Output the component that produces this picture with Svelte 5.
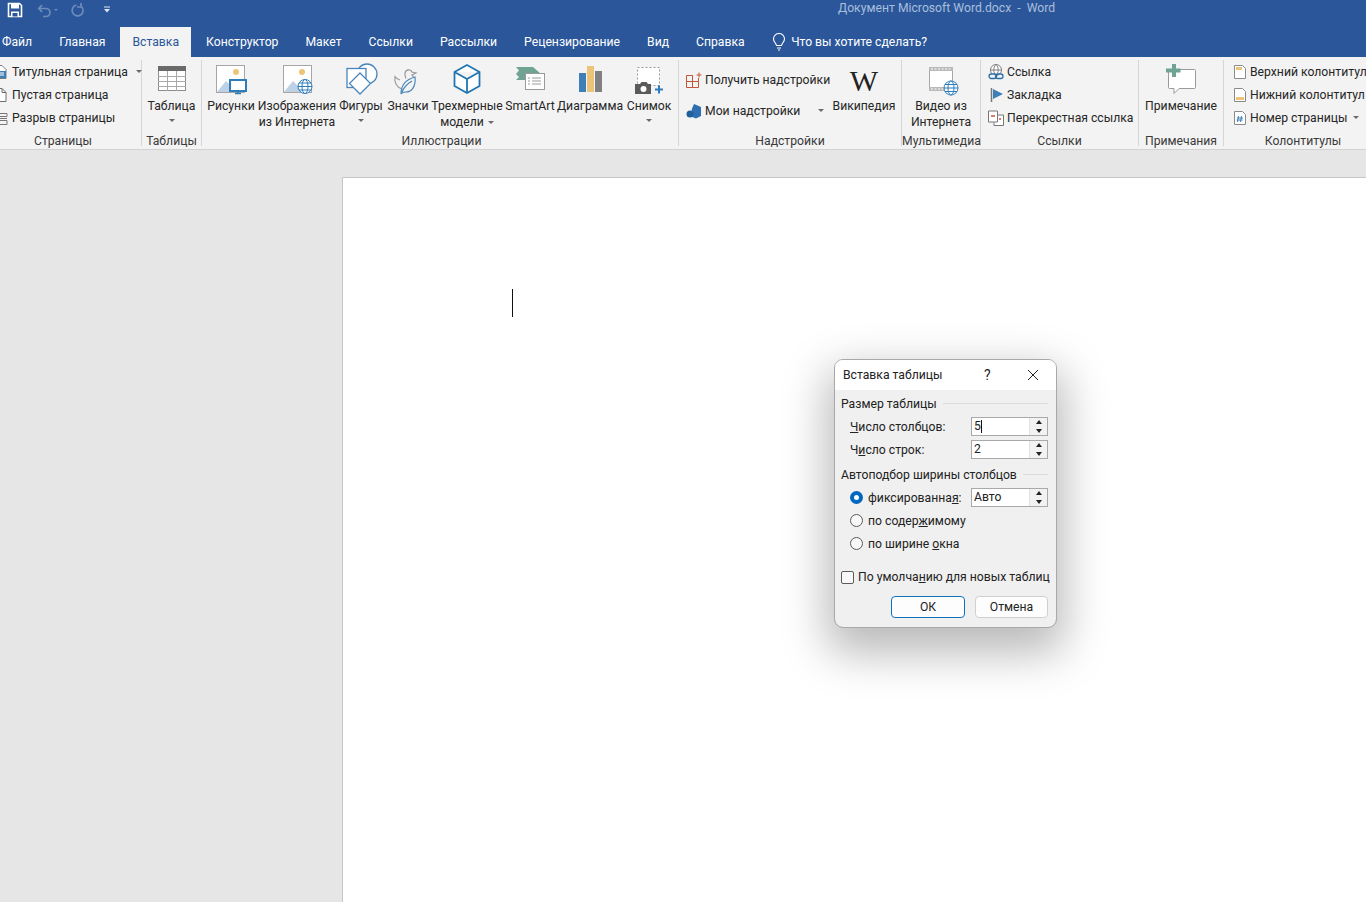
<script>
  const tabs = ['Файл','Главная','Вставка','Конструктор','Макет','Ссылки','Рассылки','Рецензирование','Вид','Справка'];
</script>

<div class="app">
  <header class="titlebar">
    <div class="qat">
      <svg class="save" width="16" height="16" viewBox="0 0 16 16"><path d="M1.500 1.500h11l2 2v11h-13z" fill="none" stroke="#fff" stroke-width="1.600"/><rect x="4" y="2" width="8" height="4.500" fill="#fff"/><rect x="4" y="9.500" width="8" height="5" fill="#fff"/><rect x="5.500" y="11" width="5" height="3.500" fill="#2b579a"/></svg>
      <svg class="undo" width="22" height="16" viewBox="0 0 22 16"><path d="M5 3 1.800 6.500 5 10M2 6.500h7a4 4 0 0 1 0 8H6" fill="none" stroke="#6d8cbc" stroke-width="1.700"/><path d="M17 7l2 2 2-2z" fill="#6d8cbc"/></svg>
      <svg class="redo" width="16" height="16" viewBox="0 0 16 16"><path d="M11.500 4.500a5.500 5.500 0 1 1-5-1.500M11 1v4h-4" fill="none" stroke="#6d8cbc" stroke-width="1.700"/></svg>
      <svg class="custom" width="8" height="10" viewBox="0 0 8 10"><path d="M1 2h6" stroke="#dfe7f3" stroke-width="1"/><path d="M1 4h6L4 7.500z" fill="#dfe7f3"/></svg>
    </div>
    <div class="doc-title">Документ Microsoft Word.docx  -  Word</div>
  </header>

  <nav class="tabs">
    {#each tabs as t}
      <div class="tab" class:active={t === 'Вставка'}>{t}</div>
    {/each}
    <div class="tell">
      <svg width="14" height="18" viewBox="0 0 14 18"><path d="M4.500 12.500C4 10 1.500 9 1.500 6a5.500 5.500 0 0 1 11 0c0 3-2.500 4-3 6.500zM5 15h4M6 17h2" fill="none" stroke="#fff" stroke-width="1.100"/></svg>
      <span>Что вы хотите сделать?</span>
    </div>
  </nav>

  <section class="ribbon">
    <div class="group g-pages">
      <div class="content small-list">
        <div class="sm"><svg width="16" height="16" viewBox="0 0 16 16"><path d="M3 1.500h7l4 4v9H3z" fill="#fff" stroke="#7a7a7a"/><rect x="3" y="7" width="11" height="7" fill="#3f7fb8"/><path d="M5 4h5M5 9h7M5 11h7" stroke="#fff"/></svg><span>Титульная страница</span><i class="caret"></i></div>
        <div class="sm"><svg width="16" height="16" viewBox="0 0 16 16"><path d="M3 1.500h7l4 4v9H3zM10 1.500v4h4" fill="#fff" stroke="#6e6e6e"/></svg><span>Пустая страница</span></div>
        <div class="sm"><svg width="16" height="16" viewBox="0 0 16 16"><path d="M1 3.500h14v3H1M1 14.500h14v-4H1M0 8.500h15" fill="none" stroke="#777"/></svg><span>Разрыв страницы</span></div>
      </div>
      <div class="glabel">Страницы</div>
    </div>

    <div class="group g-table">
      <div class="content">
        <div class="big w58">
          <svg width="32" height="32" viewBox="0 0 32 32"><rect x="2.500" y="3.500" width="27" height="24" fill="#fff" stroke="#8d8d8d"/><rect x="2" y="3" width="28" height="5" fill="#6a6a6a"/><path d="M2 13.500h28M2 18.500h28M2 23.500h28M11.500 8v20M20.500 8v20" stroke="#a9a9a9"/></svg>
          <div class="lbl">Таблица</div><i class="caret solo"></i>
        </div>
      </div>
      <div class="glabel">Таблицы</div>
    </div>

    <div class="group g-illus">
      <div class="content">
        <div class="big w52">
          <svg width="32" height="32" viewBox="0 0 32 32"><rect x="1.500" y="2.500" width="28" height="27" fill="#fff" stroke="#a6a6a6"/><circle cx="21" cy="9" r="3" fill="#ecc477"/><path d="M2 29l9-11 6 6 5 5z" fill="#bcd0e6"/><rect x="15" y="17" width="16" height="11" fill="#fff" stroke="#2e7cbb" stroke-width="2"/><path d="M20 30.500h6M23 28v2" stroke="#2e7cbb" stroke-width="1.500"/></svg>
          <div class="lbl">Рисунки</div>
        </div>
        <div class="big w80">
          <svg width="32" height="32" viewBox="0 0 32 32"><rect x="2.500" y="2.500" width="28" height="27" fill="#fff" stroke="#a6a6a6"/><circle cx="21" cy="9" r="3" fill="#ecc477"/><path d="M3 29l9-11 6 6 5 5z" fill="#bcd0e6"/><g fill="#fff" stroke="#2e7cbb"><circle cx="24" cy="23.500" r="7"/><ellipse cx="24" cy="23.500" rx="3" ry="7"/><path d="M17 23.500h14M18 20h12M18 27h12" fill="none"/></g></svg>
          <div class="lbl">Изображения<br>из Интернета</div>
        </div>
        <div class="big w48">
          <svg width="32" height="32" viewBox="0 0 32 32"><g fill="#fff" stroke="#4a86bb" stroke-width="1.300"><circle cx="22" cy="11" r="10"/><rect x="2" y="5.500" width="19" height="19"/><path d="M15 10l10.500 10.500L15 31 4.500 20.500z"/></g></svg>
          <div class="lbl">Фигуры</div><i class="caret solo"></i>
        </div>
        <div class="big w46">
          <svg width="32" height="32" viewBox="0 0 32 32"><path d="M8 17c-2-.500-4-2-5-3.500-1 6 2 11 7 12.500 5 1 9-1 11-6 1.500-3.500 1-6-1-8l4-2-4-1c-1-3-6-3-7 1-.5 2 .5 4 1 5.500" fill="none" stroke="#9a9a9a" stroke-width="1.200"/><path d="M9 31c0-8 3-14 14-17 1 9-3 15-9 15-2 0-4 0-5 2zM10 29c2-5 5-8 10-11" fill="#f3f3f3" stroke="#4b87b9" stroke-width="1.200"/></svg>
          <div class="lbl">Значки</div>
        </div>
        <div class="big w72">
          <svg width="32" height="32" viewBox="0 0 32 32"><path d="M16 2 28.500 9v14L16 30 3.500 23V9zM3.500 9 16 16l12.500-7M16 16v14" fill="#fff" stroke="#2176b1" stroke-width="1.800"/></svg>
          <div class="lbl">Трехмерные<br>модели<i class="caret"></i></div>
        </div>
        <div class="big w54">
          <svg width="32" height="32" viewBox="0 0 32 32"><path d="M2 4h17l8 7H2l3-3.500z" fill="#6fa393"/><path d="M2 11h19l-8 6H2l3-3z" fill="#6fa393"/><rect x="11.500" y="10.500" width="19" height="16" fill="#fff" stroke="#9a9a9a"/><path d="M18 15h9M18 18h9M18 21h9M14 15h2M14 18h2M14 21h2" stroke="#9a9a9a"/></svg>
          <div class="lbl">SmartArt</div>
        </div>
        <div class="big w66">
          <svg width="32" height="32" viewBox="0 0 32 32"><rect x="5" y="10" width="7" height="19" fill="#3f7fb8"/><rect x="13" y="3" width="7" height="26" fill="#ecc477"/><rect x="21" y="8" width="7" height="21" fill="#808080"/></svg>
          <div class="lbl">Диаграмма</div>
        </div>
        <div class="big w52">
          <svg width="32" height="32" viewBox="0 0 32 32"><rect x="4.500" y="4.500" width="22" height="18" fill="#fff" stroke="#9a9a9a" stroke-dasharray="2 2"/><path d="M2 21h5l1.500-2h5l1.500 2h3v10H2z" fill="#5a5a5a"/><circle cx="10.500" cy="26" r="3" fill="#fff"/><path d="M22 26.500h8M26 22.500v8" stroke="#2e7cbb" stroke-width="2"/></svg>
          <div class="lbl">Снимок</div><i class="caret solo"></i>
        </div>
      </div>
      <div class="glabel">Иллюстрации</div>
    </div>

    <div class="group g-addins">
      <div class="content">
        <div class="addin-list">
          <div class="sm tall"><svg width="16" height="16" viewBox="0 0 16 16"><path d="M.5 3.500h6v6h-6zM.5 9.500v6h6v-6zM6.500 9.500h6v6h-6zM6.500 3.500v6h6V6" fill="none" stroke="#c4543a"/><path d="M13 .5v5M10.500 3h5" stroke="#c4543a"/></svg><span>Получить надстройки</span></div>
          <div class="sm tall"><svg width="16" height="16" viewBox="0 0 16 16"><path d="M8 1l7 3v9l-5 2.500-5-2 1-8z" fill="#2d6fb0"/><circle cx="4" cy="11" r="3.500" fill="#1f5f9e"/></svg><span>Мои надстройки</span><i class="caret far"></i></div>
        </div>
        <div class="big w66">
          <div class="wiki">W</div>
          <div class="lbl">Википедия</div>
        </div>
      </div>
      <div class="glabel">Надстройки</div>
    </div>

    <div class="group g-media">
      <div class="content">
        <div class="big wfull">
          <svg width="32" height="32" viewBox="0 0 32 32"><rect x="4.500" y="4.500" width="23" height="23" fill="#fff" stroke="#a6a6a6"/><path d="M4 4h24v4H4zM4 24h24v4H4z" fill="#b9b9b9"/><path d="M6 6h20M6 26h14" stroke="#fff" stroke-dasharray="2 1.500"/><g fill="#fff" stroke="#2e7cbb"><circle cx="26" cy="25" r="7"/><ellipse cx="26" cy="25" rx="3" ry="7"/><path d="M19 25h14M20 21.500h12M20 28.500h12" fill="none"/></g></svg>
          <div class="lbl">Видео из<br>Интернета</div>
        </div>
      </div>
      <div class="glabel">Мультимедиа</div>
    </div>

    <div class="group g-links">
      <div class="content small-list">
        <div class="sm"><svg width="16" height="16" viewBox="0 0 16 16"><circle cx="8" cy="6" r="5.500" fill="#fff" stroke="#808080"/><path d="M2.500 6h11M8 .5c-3 3-3 8 0 11M8 .5c3 3 3 8 0 11" fill="none" stroke="#808080"/><rect x="1" y="10" width="7.500" height="4.500" rx="2.200" fill="#f3f3f3" stroke="#2e6fa8" stroke-width="1.300"/><rect x="7.500" y="10" width="7.500" height="4.500" rx="2.200" fill="none" stroke="#2e6fa8" stroke-width="1.300"/></svg><span>Ссылка</span></div>
        <div class="sm"><svg width="16" height="16" viewBox="0 0 16 16"><path d="M3.500 1v14" stroke="#777" stroke-width="1.500"/><path d="M5 2l10 5-10 5z" fill="#3f7fb8"/></svg><span>Закладка</span></div>
        <div class="sm"><svg width="16" height="16" viewBox="0 0 16 16"><path d="M.5 1h9v11h-9zM10 5h5.500v10.500H6V12.500" fill="#fff" stroke="#777"/><path d="M3 6h4M11 9h2" stroke="#c4543a" stroke-width="1.500"/></svg><span>Перекрестная ссылка</span></div>
      </div>
      <div class="glabel">Ссылки</div>
    </div>

    <div class="group g-notes">
      <div class="content">
        <div class="big wfull">
          <svg width="32" height="32" viewBox="0 0 32 32"><path d="M3.500 6.500h26a1 1 0 0 1 1 1v17a1 1 0 0 1-1 1H14l-5 5v-5H4.500a1 1 0 0 1-1-1z" fill="#fff" stroke="#9a9a9a"/><path d="M7 1h4v4.500h4.500v4H11V14H7V9.500H1v-4h6z" fill="#6fa393"/></svg>
          <div class="lbl">Примечание</div>
        </div>
      </div>
      <div class="glabel">Примечания</div>
    </div>

    <div class="group g-head">
      <div class="content small-list">
        <div class="sm"><svg width="16" height="16" viewBox="0 0 16 16"><path d="M2.500 1.500h8l3 3v10h-11z" fill="#fff" stroke="#8a8a8a"/><rect x="4" y="3" width="6" height="3" fill="#ecc477"/></svg><span>Верхний колонтитул</span></div>
        <div class="sm"><svg width="16" height="16" viewBox="0 0 16 16"><path d="M2.500 1.500h8l3 3v10h-11z" fill="#fff" stroke="#8a8a8a"/><rect x="4" y="10" width="8" height="3" fill="#ecc477"/></svg><span>Нижний колонтитул</span></div>
        <div class="sm"><svg width="16" height="16" viewBox="0 0 16 16"><path d="M2.500 1.500h8l3 3v10h-11z" fill="#fff" stroke="#8a8a8a"/><path d="M6.500 6l-1 6M9.500 6l-1 6M5 8h6M4.700 10h6" stroke="#3f7fb8"/></svg><span>Номер страницы</span><i class="caret"></i></div>
      </div>
      <div class="glabel">Колонтитулы</div>
    </div>
  </section>

  <main class="canvas">
    <div class="page"><div class="cursor"></div></div>
  </main>

  <div class="dialog">
    <div class="dlg-title">
      <span class="dlg-name">Вставка таблицы</span>
      <span class="help">?</span>
      <svg class="close" width="12" height="12" viewBox="0 0 12 12"><path d="M1 1l10 10M11 1 1 11" stroke="#222" stroke-width="1"/></svg>
    </div>
    <div class="dlg-body">
      <div class="legend"><span>Размер таблицы</span></div>
      <div class="row r1"><label for="a"><u>Ч</u>исло столбцов:</label><div class="spin"><span class="val">5<b class="caretline"></b></span><div class="arrows"><i class="up"></i><i class="down"></i></div></div></div>
      <div class="row r2"><label for="a">Ч<u>и</u>сло строк:</label><div class="spin"><span class="val">2</span><div class="arrows"><i class="up"></i><i class="down"></i></div></div></div>
      <div class="legend l2"><span>Автоподбор ширины столбцов</span></div>
      <div class="row r3"><span class="radio on"></span><label for="a">фиксированна<u>я</u>:</label><div class="spin"><span class="val">Авто</span><div class="arrows"><i class="up"></i><i class="down"></i></div></div></div>
      <div class="row r4"><span class="radio"></span><label for="a">по содер<u>ж</u>имому</label></div>
      <div class="row r4"><span class="radio"></span><label for="a">по ширине <u>о</u>кна</label></div>
      <div class="check"><span class="box"></span><label for="a">По умолча<u>н</u>ию для новых таблиц</label></div>
      <div class="buttons"><div class="btn ok">ОК</div><div class="btn">Отмена</div></div>
    </div>
  </div>
</div>

<style>
  :global(body) { margin: 0; overflow: hidden; }
  .app { width: 1366px; height: 902px; overflow: hidden; position: relative; background: #e6e6e6; font-family: Roboto, "Noto Sans", sans-serif; font-size: 12.200px; color: #262626; display: flex; flex-direction: column; }

  .titlebar { height: 27px; background: #2b579a; display: flex; flex: none; }
  .qat { display: flex; align-items: flex-start; padding: 2px 0 0 7px; }
  .save { margin-right: 14px; }
  .undo { margin-right: 11px; }
  .custom { margin: 3px 0 0 17px; }
  .doc-title { margin-left: 727px; color: #a9bedd; white-space: pre; line-height: 17px; }

  .tabs { height: 30px; background: #2b579a; display: flex; flex: none; color: #fff; margin-left: -11.500px; }
  .tab { padding: 0 13.500px; line-height: 30px; height: 30px; white-space: nowrap; }
  .tab.active { background: #f3f3f3; color: #2b579a; padding: 0 12px; margin: 0 1.500px; }
  .tell { display: flex; align-items: center; gap: 5px; margin-left: 14px; }

  .ribbon { height: 93px; background: #f3f3f3; border-bottom: 1px solid #d2d2d2; display: flex; flex: none; overflow: hidden; padding-top: 3px; box-sizing: border-box; }
  .group { height: 86px; flex: none; border-right: 1px solid #d6d6d6; display: flex; flex-direction: column; box-sizing: border-box; }
  .content { height: 73px; display: flex; }
  .glabel { height: 13px; line-height: 16px; text-align: center; white-space: nowrap; color: #3a3a3a; }
  .g-pages { width: 157px; margin-left: -15px; }
  .g-table { width: 60px; }
  .g-illus { width: 477px; padding-left: 3px; }
  .g-addins { width: 223px; }
  .g-media { width: 79px; }
  .g-links { width: 158px; }
  .g-notes { width: 85px; }
  .g-head { width: 158px; border-right: 0; }

  .big { display: flex; flex-direction: column; align-items: center; flex: none; padding-top: 3px; }
  .big svg { display: block; margin-bottom: 3px; overflow: visible; }
  .lbl { line-height: 16px; text-align: center; white-space: nowrap; }
  .w46 { width: 46px; } .w48 { width: 48px; } .w52 { width: 52px; } .w54 { width: 54px; }
  .w58 { width: 59px; } .w66 { width: 66px; } .w72 { width: 72px; } .w80 { width: 80px; }
  .wfull { width: 100%; }

  .caret { display: inline-block; width: 0; height: 0; border: 3px solid transparent; border-top: 3px solid #6b6b6b; border-bottom: 0; margin-left: 4px; vertical-align: middle; }
  .caret.solo { margin: 5px 0 0; }
  .caret.far { margin-left: 15px; }

  .small-list { flex-direction: column; }
  .g-pages .small-list { padding-left: 7px; }
  .g-links .small-list { padding-left: 7px; }
  .g-head .small-list { padding-left: 8px; }
  .sm { height: 23px; display: flex; align-items: center; gap: 4px; white-space: nowrap; flex: none; }
  .sm svg { flex: none; overflow: visible; }
  .g-links .sm { gap: 3px; }
  .g-head .sm { gap: 2px; }

  .addin-list { width: 152px; padding: 4px 0 0 7px; box-sizing: border-box; }
  .sm.tall { height: 31px; gap: 3px; }
  .wiki { font-family: "Liberation Serif", serif; font-size: 30px; line-height: 35px; color: #222; }

  .canvas { flex: 1; min-height: 0; padding: 27px 0 0 342px; display: flex; box-sizing: border-box; }
  .page { flex: 1; background: #fff; border: 1px solid #c6c6c6; border-right: 0; border-bottom: 0; padding: 111px 0 0 169px; }
  .cursor { width: 1px; height: 28px; background: #111; }

  .dialog { position: absolute; left: 835px; top: 360px; width: 221px; height: 267px; box-sizing: border-box; background: #f0f0f0; border-radius: 8px; outline: 1px solid #a8a8a8; box-shadow: 0 18px 45px 8px rgba(0,0,0,.28); overflow: hidden; display: flex; flex-direction: column; color: #222; }
  .dlg-title { height: 30px; flex: none; background: #fff; display: flex; align-items: center; padding-left: 8px; position: relative; }
  .dlg-name { width: 141px; }
  .help { width: 45px; font-size: 14px; color: #222; }
  .close { margin-left: -2px; }
  .dlg-body { padding: 5px 8px 0 6px; flex: 1; }
  .legend { display: flex; align-items: center; height: 17px; gap: 6px; }
  .legend::after { content: ""; flex: 1; height: 1px; background: #dcdcdc; }
  .row { display: flex; align-items: center; height: 23px; padding-left: 9px; }
  .row label { flex: 1; white-space: nowrap; }
  .r1 { margin-top: 3px; }
  .l2 { margin-top: 4px; height: 19px; }
  .r3 { margin-top: 2px; }
  .radio { width: 13px; height: 13px; box-sizing: border-box; border: 1px solid #5b5b5b; border-radius: 50%; background: #f8f8f8; margin-right: 5px; flex: none; }
  .radio.on { border: 4px solid #0067c0; background: #fff; }
  .spin { width: 77px; height: 19px; box-sizing: border-box; background: #fff; border: 1px solid #a9a9a9; display: flex; flex: none; margin-left: -1px; }
  .val { flex: 1; padding-left: 2px; line-height: 17px; display: flex; align-items: center; }
  .caretline { width: 1px; height: 13px; background: #111; }
  .arrows { width: 17px; display: flex; flex-direction: column; background: #f0f0f0; border-left: 1px solid #e2e2e2; gap: 1px; }
  .arrows i { flex: 1; background: #f2f2f2; display: flex; align-items: center; justify-content: center; }
  .arrows i::after { content: ""; border: 3.500px solid transparent; }
  .up::after { border-bottom: 4px solid #222 !important; border-top: 0 !important; }
  .down::after { border-top: 4px solid #222 !important; border-bottom: 0 !important; }
  .check { display: flex; align-items: center; gap: 4px; margin-top: 13px; height: 18px; white-space: nowrap; }
  .box { width: 13px; height: 13px; border: 1px solid #5b5b5b; border-radius: 2px; background: #f8f8f8; flex: none; box-sizing: border-box; }
  .buttons { display: flex; gap: 10px; margin-top: 10px; padding-left: 50px; }
  .btn { width: 73px; height: 22px; box-sizing: border-box; border: 1px solid #d0d0d0; border-radius: 4px; background: #fdfdfd; text-align: center; line-height: 20px; }
  .btn.ok { border: 1.500px solid #1270b8; width: 74px; }
</style>
